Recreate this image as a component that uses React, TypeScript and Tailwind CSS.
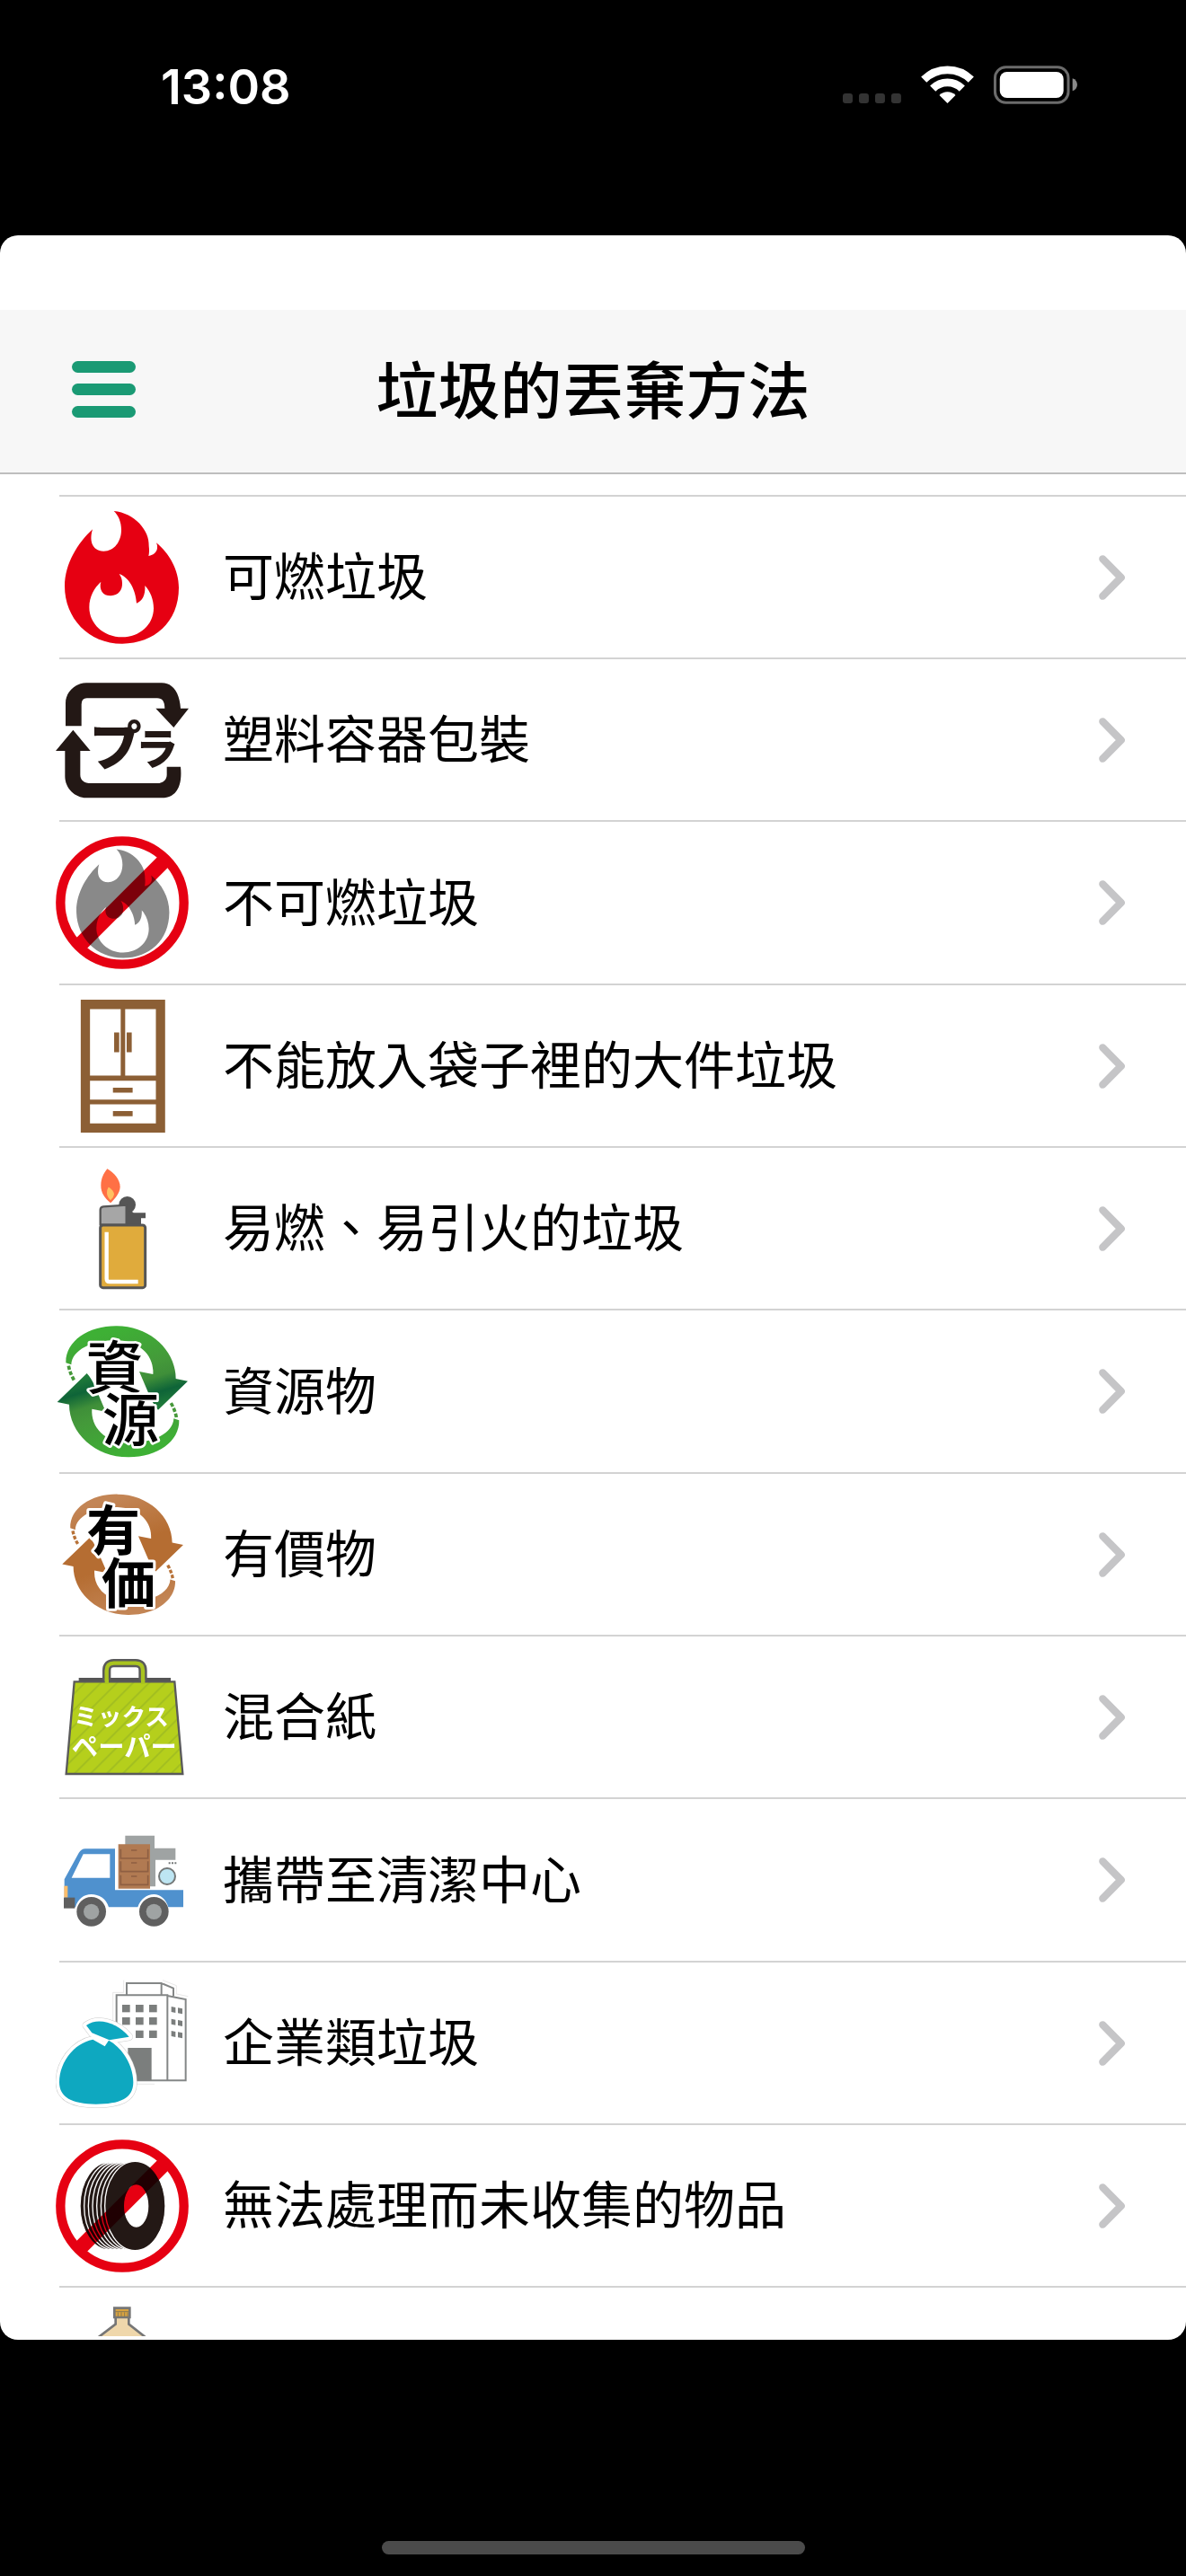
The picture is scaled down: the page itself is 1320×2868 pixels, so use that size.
import type { ReactNode } from "react"

const FLAME =
  "M260 84C330 90 380 150 377 200C379 215 378 226 376 234C392 232 406 220 405 205Q405 196 402 190C445 225 477 280 477 340C477 455 395 527 288 527C175 527 96 440 96 335C96 260 140 190 189 145C178 180 185 217 226 218C262 218 285 185 285 147C285 120 275 98 260 84Z" +
  "M278 294C310 305 333 345 336 392C355 385 366 365 364 333C382 352 393 380 393 408C393 465 345 505 288 505C225 505 178 460 178 405C178 370 195 340 217 320C210 345 222 367 250 367C275 366 289 348 288 325C288 312 284 302 278 294Z"

const CYCLE_ARROW =
  "M100 712C98 640 175 588 270 589C380 589 467 670 467 765L507 773L408 869Q395 855 383 830L345 741L391 750C395 690 350 640 270 636C185 636 120 670 118 718Z"

const SACK =
  "M190 812L230 835L243 815C290 840 325 900 325 955C325 1010 280 1028 200 1028C120 1028 78 1005 78 955C78 890 125 825 190 812Z"

const SACK_KNOT = "M168 765C210 735 275 760 311 803L245 814L187 790Z"

function Icon({ viewBox, children }: { viewBox: string; children: ReactNode }) {
  return (
    <svg viewBox={viewBox} className="-ml-1 h-[148px] w-[148px] shrink-0" aria-hidden="true">
      {children}
    </svg>
  )
}

function FlameIcon() {
  return (
    <Icon viewBox="66 84 444 444">
      <path d={FLAME} fill="#e60012" fillRule="evenodd" />
    </Icon>
  )
}

function PlasticIcon() {
  return (
    <Icon viewBox="66 627 444 444">
      <g fill="#231815">
        <path d="M99 802V725C99 690 130 658 168 658H420C460 658 480 695 483 743H510L460 807L400 743H430C430 720 422 709 405 709H170Q152 709 152 730V802Z" />
        <path d="M124 815L182 885H148V965C148 982 160 993 185 993H405C425 993 437 980 437 965V938H483C490 1000 470 1042 420 1042H168C130 1042 97 1010 97 970V885H66Z" />
        <g className="font-['Noto_Sans_CJK_JP',sans-serif] font-black" textAnchor="middle">
          <text x="266" y="932" fontSize="174">
            プ
          </text>
          <text x="404" y="931" fontSize="142">
            ラ
          </text>
        </g>
      </g>
    </Icon>
  )
}

function BanSign({ cy }: { cy: number }) {
  return (
    <g fill="none" stroke="#e60012">
      <circle cx="288" cy={cy} r="206" strokeWidth="31" />
      <path d={`M145 ${cy + 143}L431 ${cy - 143}`} strokeWidth="50" />
    </g>
  )
}

function NonBurnableIcon() {
  return (
    <Icon viewBox="66 63 444 444">
      <BanSign cy={285} />
      <path
        d={FLAME}
        fill="#898989"
        fillRule="evenodd"
        transform="translate(57 38) scale(0.814 0.819)"
        className="mix-blend-multiply"
      />
    </Icon>
  )
}

function WardrobeIcon() {
  return (
    <Icon viewBox="66 607 444 446">
      <path
        fill="#8c5f35"
        fillRule="evenodd"
        d="M149 607H432V1053H149ZM180 639V862H283V639ZM298 639V862H401V639ZM180 879V942H401V879ZM180 958V1022H401V958Z"
      />
      <path
        fill="#8c5f35"
        d="M261 717H278V783H261ZM303 717H320V783H303ZM257 902H323V919H257ZM257 981H323V998H257Z"
      />
    </Icon>
  )
}

function LighterIcon() {
  return (
    <Icon viewBox="66 41 444 444">
      <path
        fill="#ff7045"
        d="M238 63C260 75 281 100 281 123C281 145 262 165 249 177C230 160 217 145 217 118C217 95 226 78 238 63Z"
      />
      <path fill="#ffc061" d="M242 124C252 128 261 140 261 148Q260 158 249 168C240 160 237 150 237 143Q237 132 242 124Z" />
      <g fill="#555">
        <circle cx="305" cy="183" r="28" />
        <path d="M298 205H320L326 210H366V228H351V250H298Z" />
      </g>
      <rect x="215" y="251" width="150" height="209" rx="9" fill="#e0ab3c" stroke="#555" strokeWidth="9" />
      <path d="M215 249V200Q215 190 225 189L302 184V249Z" fill="#a6a6a6" stroke="#555" strokeWidth="7" />
      <path d="M236 274V430Q236 440 246 440H341" fill="none" stroke="#fff" strokeWidth="13" />
    </Icon>
  )
}

function CycleArrows({ id, stops, dash }: { id: string; stops: [number, string][]; dash: string }) {
  const half = (
    <>
      <path d={CYCLE_ARROW} fill={`url(#${id})`} />
      <path d="M109 722Q114 748 128 771" fill="none" stroke={dash} strokeWidth="11" strokeDasharray="13 6" />
    </>
  )
  return (
    <>
      <linearGradient id={id} gradientUnits="userSpaceOnUse" x1="300" y1="589" x2="385" y2="865">
        {stops.map(([offset, color]) => (
          <stop key={offset} offset={offset} stopColor={color} />
        ))}
      </linearGradient>
      {half}
      <g transform="rotate(180 289 808)">{half}</g>
    </>
  )
}

function ResourceIcon() {
  return (
    <Icon viewBox="66 585 444 444">
      <CycleArrows
        id="resource-arrow"
        dash="#46983a"
        stops={[
          [0, "#3eb035"],
          [0.5, "#44993a"],
          [0.66, "#3f8f39"],
          [0.84, "#0e6438"],
          [1, "#1f7a3a"],
        ]}
      />
      <g
        className="font-['Noto_Sans_CJK_JP',sans-serif] font-medium"
        textAnchor="middle"
        fontSize="190"
        stroke="#fff"
        strokeWidth="16"
        strokeLinejoin="round"
        paintOrder="stroke"
      >
        <text x="263" y="797">
          資
        </text>
        <text x="316" y="973">
          源
        </text>
      </g>
    </Icon>
  )
}

function ValuableIcon() {
  return (
    <Icon viewBox="66 52 444 444">
      <g transform="translate(22 -470) scale(0.927 0.92)">
        <CycleArrows
          id="valuable-arrow"
          dash="#b87238"
          stops={[
            [0, "#c38555"],
            [0.6, "#b56d32"],
            [1, "#b56d32"],
          ]}
        />
      </g>
      <g
        className="font-['Noto_Sans_CJK_JP',sans-serif] font-bold"
        textAnchor="middle"
        fontSize="180"
        stroke="#fff"
        strokeWidth="18"
        strokeLinejoin="round"
        paintOrder="stroke"
      >
        <text x="258" y="258">
          有
        </text>
        <text x="309" y="436">
          価
        </text>
      </g>
    </Icon>
  )
}

function PaperBagIcon() {
  return (
    <Icon viewBox="66 594 444 444">
      <pattern id="bag-stripes" patternUnits="userSpaceOnUse" width="38" height="38" patternTransform="rotate(45)">
        <rect width="38" height="38" fill="#b5cf1c" />
        <rect width="6" height="38" fill="#a3bf20" />
      </pattern>
      <path d="M143 684H450V700H143Z" fill="#555" />
      <g fill="none">
        <path d="M236 700V660Q236 635 260 635H333Q357 635 357 660V700" stroke="#5a5a5a" strokeWidth="28" />
        <path d="M236 704V660Q236 635 260 635H333Q357 635 357 660V704" stroke="#a9c41f" strokeWidth="13" />
      </g>
      <path d="M128 697H463L490 1005H101Z" fill="url(#bag-stripes)" stroke="#5a5a5a" strokeWidth="7" />
      <path d="M230 690H243V704H230ZM351 690H364V704H351Z" fill="#a9c41f" />
      <g
        className="font-['Noto_Sans_CJK_JP',sans-serif] font-bold"
        textAnchor="middle"
        fill="#fff"
      >
        <text x="285" y="843" fontSize="80">
          ミックス
        </text>
        <text x="295" y="944" fontSize="88">
          ペーパー
        </text>
      </g>
    </Icon>
  )
}

function TruckIcon() {
  return (
    <Icon viewBox="66 58 444 444">
      <path d="M298 132H396V174H466V213H399V302H298Z" fill="#9fa3a3" />
      <path
        fill="#4f91ce"
        fillRule="evenodd"
        d="M95 278L143 190Q151 176 165 176H264V314H492V371H442C435 345 415 328 394 328C370 328 348 345 340 371H243C235 342 210 328 185 328C160 328 140 343 132 371H95ZM158 194L119 273H247V194Z"
      />
      <path d="M94 300H106V339H94Z" fill="#fdbd6b" />
      <path d="M93 339H130V375H93Z" fill="#5f5f5f" />
      {[185, 394].map((cx) => (
        <g key={cx}>
          <circle cx={cx} cy="386" r="49" fill="#5f5f5f" />
          <circle cx={cx} cy="386" r="26" fill="#9fa3a3" />
        </g>
      ))}
      <path d="M275 161H381V309H275Z" fill="#b17a52" />
      <path
        d="M283 177V208H374V177M283 218V252H374V218M283 264V296H374V264M318 181H337M318 223H337M318 268H337"
        fill="none"
        stroke="#8e5f42"
        strokeWidth="5"
      />
      <circle cx="438" cy="268" r="27" fill="#bde5f2" stroke="#747878" strokeWidth="6" />
      <path d="M443 224H449M453 224H459M463 224H469" stroke="#747878" strokeWidth="6" />
    </Icon>
  )
}

function BusinessIcon() {
  return (
    <Icon viewBox="66 603 444 444">
      <path
        d="M257 760V655H293V614M423 614L469 632V660L508 668M335 961H396"
        fill="none"
        stroke="#ddd"
        strokeWidth="2"
      />
      <path
        d="M303 664V624H419V664M419 624L459 641V667M269 664H439V949H269ZM439 666L500 678V949H439"
        fill="#fff"
        stroke="#848787"
        strokeWidth="6"
      />
      <g fill="#7b7e7d">
        {[696, 738, 782].map((y) =>
          [288, 333, 378].map((x) =>
            y === 782 && x === 288 ? null : <rect key={`${x}-${y}`} x={x} y={y} width="26" height="25" />
          )
        )}
        {[702, 743, 783].map((y) => (
          <path key={y} d={`M452 ${y}l14 3v18l-14 -3ZM474 ${y + 4}l15 3v18l-15 -3Z`} />
        ))}
        <path d="M307 840H386V949H307Z" />
      </g>
      <path d={SACK} fill="#ccc" stroke="#ccc" strokeWidth="26" strokeLinejoin="round" />
      <path d={SACK_KNOT} stroke="#ccc" strokeWidth="26" strokeLinejoin="round" />
      <path d={SACK} fill="#fff" stroke="#fff" strokeWidth="23" strokeLinejoin="round" />
      <path d={SACK_KNOT} fill="#fff" stroke="#fff" strokeWidth="23" strokeLinejoin="round" />
      <path d={SACK} fill="#0ea8c0" />
      <path d={SACK_KNOT} fill="#0ea8c0" />
    </Icon>
  )
}

function TireIcon() {
  return (
    <Icon viewBox="66 69 444 444">
      <BanSign cy={291} />
      <g className="mix-blend-multiply" fill="#231815" stroke="#fff" strokeWidth="4">
        {[246, 260, 274, 288, 302, 316].map((cx) => (
          <ellipse key={cx} cx={cx} cy="291" rx="99" ry="147" />
        ))}
        <ellipse cx="331" cy="291" rx="101" ry="149" />
        <ellipse cx="335" cy="291" rx="39" ry="69" fill="#fff" />
      </g>
    </Icon>
  )
}

function BottleIcon() {
  return (
    <Icon viewBox="66 612 444 444">
      <path
        d="M266 664V686L200 736V1000H374V736L310 686V664"
        fill="#efd7ab"
        stroke="#767676"
        strokeWidth="8"
      />
      <path d="M262 632H313V663H262Z" fill="#d9a340" stroke="#767676" strokeWidth="8" />
      <path d="M264 644H311M274 646V662M285 646V662M296 646V662M306 646V662" stroke="#8a7a52" strokeWidth="3" />
    </Icon>
  )
}

function Chevron() {
  return (
    <svg viewBox="186 232 87 150" className="h-[50px] w-[29px] shrink-0" aria-hidden="true">
      <path
        d="M199 245L260 307L199 369"
        fill="none"
        stroke="#c5c5c7"
        strokeWidth="25"
        strokeLinecap="round"
        strokeLinejoin="round"
      />
    </svg>
  )
}

function StatusIcons() {
  return (
    <svg viewBox="111 69 784 129" className="h-[43px] w-[261px]" aria-hidden="true">
      {[111, 165, 219, 273].map((x) => (
        <rect key={x} x={x} y="162" width="33" height="33" rx="9" fill="#333" />
      ))}
      <g fill="none" stroke="#fff" strokeWidth="26">
        <path d="M382 116A112 112 0 0 1 540 116" />
        <path d="M412 146A69 69 0 0 1 510 146" />
      </g>
      <path d="M461 195L434 168A39 39 0 0 1 488 168Z" fill="#fff" />
      <rect x="620" y="74" width="245" height="119" rx="36" fill="none" stroke="#6b6b6b" strokeWidth="9" />
      <rect x="636" y="90" width="213" height="87" rx="24" fill="#fff" />
      <path d="M879 112C900 118 900 148 879 154Z" fill="#8a8a8a" />
    </svg>
  )
}

const categories = [
  { label: "可燃垃圾", icon: <FlameIcon /> },
  { label: "塑料容器包裝", icon: <PlasticIcon /> },
  { label: "不可燃垃圾", icon: <NonBurnableIcon /> },
  { label: "不能放入袋子裡的大件垃圾", icon: <WardrobeIcon /> },
  { label: "易燃、易引火的垃圾", icon: <LighterIcon /> },
  { label: "資源物", icon: <ResourceIcon /> },
  { label: "有價物", icon: <ValuableIcon /> },
  { label: "混合紙", icon: <PaperBagIcon /> },
  { label: "攜帶至清潔中心", icon: <TruckIcon /> },
  { label: "企業類垃圾", icon: <BusinessIcon /> },
  { label: "無法處理而未收集的物品", icon: <TireIcon /> },
]

export default function App() {
  return (
    <div
      lang="zh-TW"
      className="flex h-screen flex-col bg-black font-['Noto_Sans_CJK_TC',sans-serif] text-black"
    >
      <div className="flex h-[262px] shrink-0 items-start justify-between pt-[73px] pr-[121px] pl-[179px]">
        <time className="font-['Inter',sans-serif] text-[54px] leading-[48px] font-semibold text-white">13:08</time>
        <StatusIcons />
      </div>

      <main className="flex min-h-0 flex-1 flex-col overflow-hidden rounded-[20px] bg-white pt-[83px] pb-1">
        <header className="flex h-[183px] shrink-0 items-center border-b-2 border-[#bebebe] bg-[#f7f7f7] px-20 pb-1">
          <button type="button" aria-label="Menu" className="flex w-[71px] flex-col gap-3">
            <span className="h-[13px] rounded-full bg-[#1a9a74]" />
            <span className="h-[13px] rounded-full bg-[#1a9a74]" />
            <span className="h-[13px] rounded-full bg-[#1a9a74]" />
          </button>
          <h1 className="flex-1 pr-[71px] pb-1 text-center text-[69px] leading-none font-medium">垃圾的丟棄方法</h1>
        </header>

        <ul className="mt-[23px] min-h-0 flex-1 overflow-hidden">
          {categories.map(({ label, icon }) => (
            <li key={label} className="ml-[66px] h-[181px] border-t-2 border-[#d3d3d3] nth-[3n]:h-[182px]">
              <button type="button" className="flex h-full w-full items-center pr-[68px] text-left">
                {icon}
                <span className="flex-1 pb-2 pl-[38px] text-[57px] leading-none">{label}</span>
                <Chevron />
              </button>
            </li>
          ))}
          <li className="ml-[66px] h-[181px] border-t-2 border-[#d3d3d3]">
            <button type="button" aria-label="食用油" className="flex h-full w-full items-center">
              <BottleIcon />
            </button>
          </li>
        </ul>
      </main>

      <div className="flex h-[263px] shrink-0 items-end justify-center pb-6">
        <div className="h-[15px] w-[471px] rounded-full bg-[#4b4b4b]" />
      </div>
    </div>
  )
}
